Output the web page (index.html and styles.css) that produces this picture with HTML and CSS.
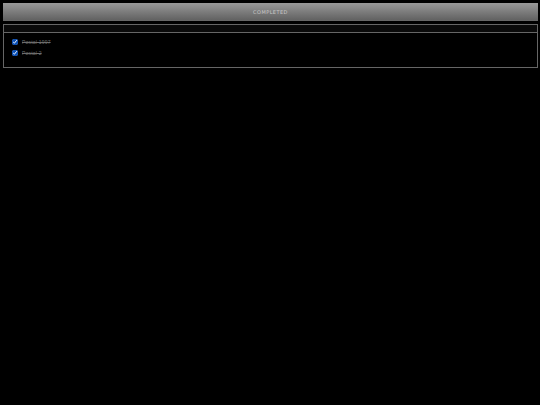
FILE: index.html
```html
<!DOCTYPE html>
<html lang="en">
<head>
<meta charset="UTF-8">
<meta name="viewport" content="width=device-width, initial-scale=1.0">
<title>Completed</title>
<link rel="stylesheet" href="styles.css">
</head>
<body>
<h1 class="title">COMPLETED</h1>
<div class="bar"></div>
<ul class="list">
    <li class="item"><input type="checkbox" class="check" checked><span class="name">Postal 1997</span></li>
    <li class="item"><input type="checkbox" class="check" checked><span class="name">Postal 2</span></li>
</ul>
</body>
</html>
```

FILE: styles.css
```css
html, body {
    height: 100%;
}

body {
    margin: 0;
    padding: 3px 2px 3px 3px;
    box-sizing: border-box;
    background-color: #000;
    font-family: "Liberation Sans", Arial, sans-serif;
}

.title {
    margin: 0 0 3px;
    height: 17px;
    line-height: 18px;
    text-align: center;
    font-family: "DejaVu Sans", sans-serif;
    font-size: 5px;
    font-weight: normal;
    letter-spacing: 0.45px;
    color: #c8c8c8;
    background: linear-gradient(#989898, #626262);
    border-bottom: 1px solid #666;
}

.bar {
    height: 7px;
    border: 1px solid #666;
    border-bottom: 0;
    background-color: #0a0a0a;
}

.list {
    list-style: none;
    margin: 0;
    padding: 3px 5px 9px;
    border: 1px solid #666;
}

.item {
    display: flex;
    align-items: center;
    height: 11px;
}

.check {
    width: 6px;
    height: 6px;
    margin: 0 4px 0 3px;
    accent-color: #0a4fb4;
}

.name {
    font-size: 5px;
    letter-spacing: 0.2px;
    color: #6c6c6c;
    text-decoration: line-through;
}
```
